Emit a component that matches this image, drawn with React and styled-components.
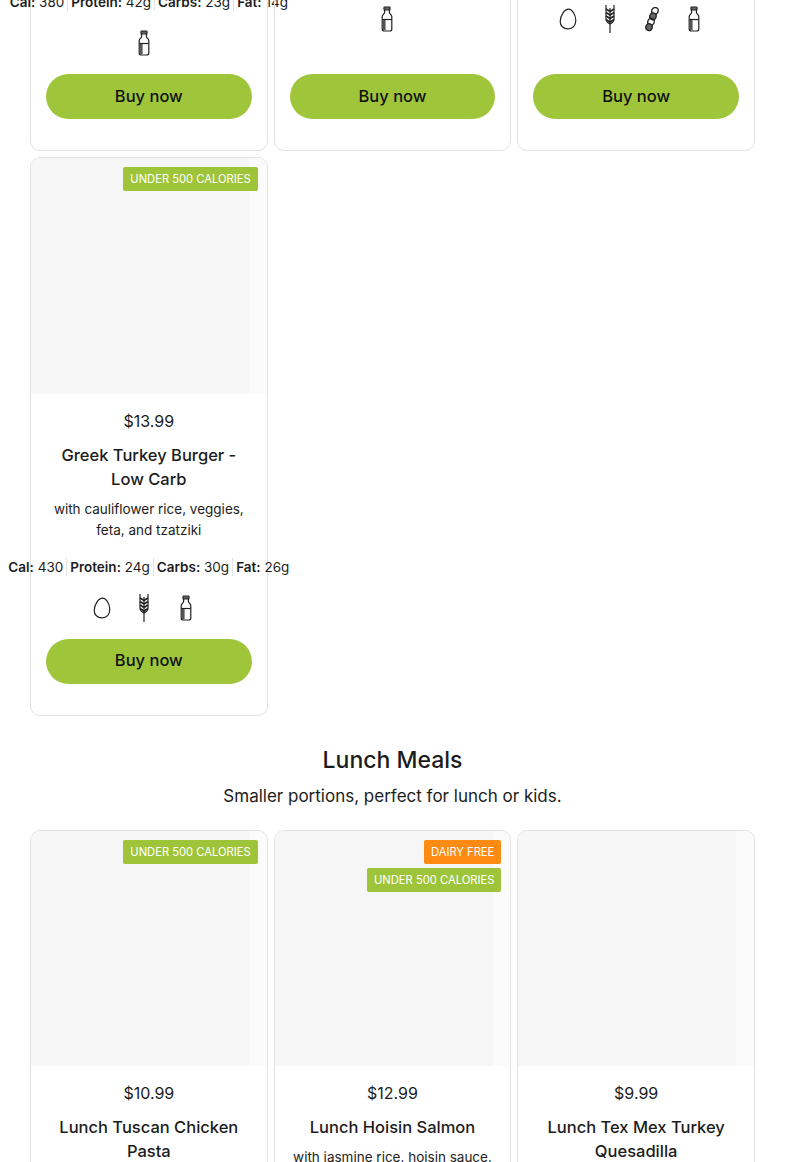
import React from "react";
import styled, { createGlobalStyle } from "styled-components";

const Global = createGlobalStyle`
  html, body {
    margin: 0;
    padding: 0;
    height: 1162px;
    overflow: hidden;
    background: #fff;
  }
  * { box-sizing: border-box; }
`;

const Page = styled.div`
  margin-top: -10px;
  padding: 0 30px;
  font-family: "Inter", "Liberation Sans", sans-serif;
  color: #1c1c1c;
`;

const Grid = styled.div`
  display: grid;
  grid-template-columns: repeat(3, minmax(0, 1fr));
  gap: 6px;
`;

const Card = styled.div`
  display: flex;
  flex-direction: column;
  border: 1px solid #e2e2e2;
  border-radius: 10px;
  padding-bottom: 31px;
`;

const Thumb = styled.div`
  position: relative;
  height: 235.6px;
  background: #fbfbfb;
  border-radius: 9px 9px 0 0;
  overflow: hidden;
`;

const ThumbFill = styled.div`
  width: 218px;
  height: 100%;
  background: #f6f6f6;
`;

const Badges = styled.div`
  position: absolute;
  top: 9px;
  right: 9px;
  display: flex;
  flex-direction: column;
  align-items: flex-end;
  gap: 4px;
`;

const Badge = styled.span`
  height: 24px;
  line-height: 24px;
  padding: 0 7px;
  border-radius: 2px;
  font-size: 11.2px;
  color: #fff;
  text-transform: uppercase;
  background: ${(p) => (p.$orange ? "#fd8a13" : "#9ec53a")};
`;

const Price = styled.div`
  margin-top: 15px;
  text-align: center;
  font-size: 16px;
  line-height: 24px;
`;

const Title = styled.h3`
  margin: 10px 16px 0;
  text-align: center;
  font-size: 16.5px;
  font-weight: 500;
  line-height: 24px;
`;

const Desc = styled.p`
  margin: 8px 16px 0;
  text-align: center;
  font-size: 13.5px;
  line-height: 21px;
`;

const Macros = styled.div`
  display: flex;
  justify-content: center;
  align-items: center;
  margin-top: ${(p) => (p.$first ? 0 : 15)}px;
  height: 22px;
  font-size: 13.5px;
  white-space: nowrap;
`;

const Macro = styled.span`
  padding: 0 3px;
  border-left: ${(p) => (p.$first ? "none" : "1px solid #e2e2e2")};
  line-height: 18px;
  & b { font-weight: 600; }
`;

const Icons = styled.div`
  display: flex;
  justify-content: center;
  gap: 10px;
  margin: ${(p) => p.$top}px 10px 16px 0;
`;

const IconBox = styled.div`
  width: 32px;
  height: 30px;
  display: flex;
  align-items: center;
  justify-content: center;
`;

const BuyButton = styled.button`
  display: block;
  margin: auto 15px 0;
  height: 45px;
  padding: 0 0 2px;
  border: none;
  border-radius: 23px;
  background: #9fc63b;
  color: #111;
  font-family: inherit;
  font-size: 16.5px;
  font-weight: 500;
`;

const SectionHead = styled.div`
  margin-top: 28.4px;
  margin-bottom: 21.6px;
  text-align: center;
`;

const Heading = styled.h2`
  margin: 0;
  font-size: 23px;
  font-weight: 500;
  line-height: 32px;
`;

const Sub = styled.p`
  margin: 8px 0 0;
  font-size: 17px;
  line-height: 24px;
`;

const Egg = () => (
  <svg width="18" height="22" viewBox="0 0 18 22" fill="none" stroke="#222" strokeWidth="1.2">
    <path d="M9.6 1.2C13.2 1.2 16.8 7 16.8 12.6C16.8 17.6 13.6 20.8 9 20.8C4.4 20.8 1.2 17.8 1.2 13.4C1.2 7.6 5.6 1.2 9.6 1.2Z" />
  </svg>
);

const Wheat = () => (
  <svg width="12" height="30" viewBox="0 0 12 30" fill="none" stroke="#222" strokeWidth="1.2">
    <path d="M6 4V29" />
    <path d="M2 1V15C2 17 4 19 6 20C8 19 10 17 10 15V1" />
    <path d="M2 5L6 7.5L10 5M2 8.5L6 11L10 8.5M2 12L6 14.5L10 12M2 15.5L6 18L10 15.5" strokeWidth="1.6" />
  </svg>
);

const Bottle = () => (
  <svg width="12" height="26" viewBox="0 0 12 26" fill="none" stroke="#222" strokeWidth="1.2">
    <rect x="3" y="1" width="6" height="3" rx="0.6" fill="#666" />
    <path d="M3.6 4V6.4C3.6 7.8 1.2 8.6 1.2 10.6V23C1.2 24.2 2 25 3.2 25H8.8C10 25 10.8 24.2 10.8 23V10.6C10.8 8.6 8.4 7.8 8.4 6.4V4" />
    <path d="M1.2 13.5H10.8" />
    <path d="M2 14H4.6V24.2H3C2.4 24.2 2 23.8 2 23.2Z" fill="#555" stroke="none" />
  </svg>
);

const Pod = () => (
  <svg width="16" height="26" viewBox="0 0 16 26" fill="none" stroke="#222" strokeWidth="1.3">
    <g transform="rotate(20 8 13)">
      <ellipse cx="8" cy="4.4" rx="3.2" ry="3.4" />
      <ellipse cx="8" cy="10.2" rx="3.2" ry="3.4" fill="#666" />
      <ellipse cx="8" cy="16" rx="3.2" ry="3.4" />
      <ellipse cx="8" cy="21.6" rx="3.2" ry="3.4" fill="#666" />
    </g>
  </svg>
);

const ICONS = { egg: Egg, wheat: Wheat, pod: Pod, bottle: Bottle };

const IconRow = ({ names, top = 15 }) => (
  <Icons $top={top}>
    {names.map((n) => {
      const Icon = ICONS[n];
      return (
        <IconBox key={n}>
          <Icon />
        </IconBox>
      );
    })}
  </Icons>
);

const MacroRow = ({ cal, protein, carbs, fat, first }) => (
  <Macros $first={first}>
    <Macro $first>
      <b>Cal:</b> {cal}
    </Macro>
    <Macro>
      <b>Protein:</b> {protein}
    </Macro>
    <Macro>
      <b>Carbs:</b> {carbs}
    </Macro>
    <Macro>
      <b>Fat:</b> {fat}
    </Macro>
  </Macros>
);

const ThumbBlock = ({ badges }) => (
  <Thumb>
    <ThumbFill />
    <Badges>
      {badges.map((b) => (
        <Badge key={b} $orange={b === "Dairy free"}>
          {b}
        </Badge>
      ))}
    </Badges>
  </Thumb>
);

const lunch = [
  {
    price: "$10.99",
    title: "Lunch Tuscan Chicken Pasta",
    badges: ["Under 500 calories"],
  },
  {
    price: "$12.99",
    title: "Lunch Hoisin Salmon",
    desc: "with jasmine rice, hoisin sauce,",
    badges: ["Dairy free", "Under 500 calories"],
  },
  {
    price: "$9.99",
    title: "Lunch Tex Mex Turkey Quesadilla",
    badges: [],
  },
];

export default function App() {
  return (
    <Page>
      <Global />
      <Grid>
        <Card>
          <MacroRow first cal="380" protein="42g" carbs="23g" fat="14g" />
          <IconRow names={["bottle"]} />
          <BuyButton>Buy now</BuyButton>
        </Card>
        <Card>
          <IconRow names={["bottle"]} top={13} />
          <BuyButton>Buy now</BuyButton>
        </Card>
        <Card>
          <IconRow names={["egg", "wheat", "pod", "bottle"]} top={13} />
          <BuyButton>Buy now</BuyButton>
        </Card>
        <Card>
          <ThumbBlock badges={["Under 500 calories"]} />
          <Price>$13.99</Price>
          <Title>Greek Turkey Burger - Low Carb</Title>
          <Desc>with cauliflower rice, veggies, feta, and tzatziki</Desc>
          <MacroRow cal="430" protein="24g" carbs="30g" fat="26g" />
          <IconRow names={["egg", "wheat", "bottle"]} />
          <BuyButton>Buy now</BuyButton>
        </Card>
      </Grid>
      <SectionHead>
        <Heading>Lunch Meals</Heading>
        <Sub>Smaller portions, perfect for lunch or kids.</Sub>
      </SectionHead>
      <Grid>
        {lunch.map((m) => (
          <Card key={m.title}>
            <ThumbBlock badges={m.badges} />
            <Price>{m.price}</Price>
            <Title>{m.title}</Title>
            {m.desc && <Desc>{m.desc}</Desc>}
          </Card>
        ))}
      </Grid>
    </Page>
  );
}
